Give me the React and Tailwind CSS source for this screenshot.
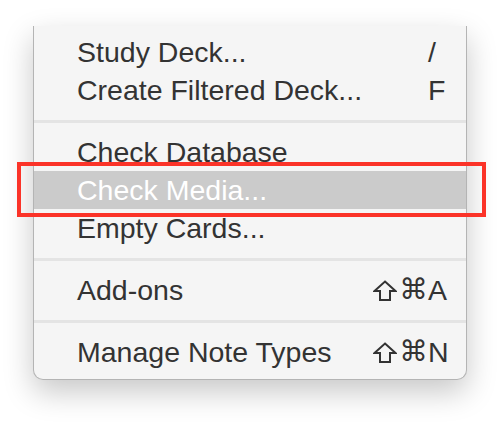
import React from 'react';

const font = { fontFamily: '"Liberation Sans", "DejaVu Sans", Arial, sans-serif' };

const groups = [
    [
        { label: 'Study Deck...', key: '/' },
        { label: 'Create Filtered Deck...', key: 'F' },
    ],
    [
        { label: 'Check Database' },
        { label: 'Check Media...', active: true },
        { label: 'Empty Cards...' },
    ],
    [{ label: 'Add-ons', mods: true, key: 'A' }],
    [{ label: 'Manage Note Types', mods: true, key: 'N' }],
];

// outline shift arrow, DejaVu's is too narrow
const ShiftIcon = () => (
    <svg width="24" height="21" viewBox="0 0 24 21" fill="none" stroke="currentColor" strokeWidth="2" strokeLinejoin="miter" className="mr-[3px]">
        <path d="M12 1.5 L22.5 11 H17 V20 H7 V11 H1.5 Z" />
    </svg>
);

const MenuRow = ({ item }) => (
    <div className={`relative flex h-[38px] items-center pl-[43px] pr-[18px] leading-[38px] ${item.active ? 'bg-[#cbcbcb] text-white' : 'text-[#333]'}`}>
        <span className="flex-1 whitespace-nowrap">{item.label}</span>
        {item.mods && (
            <span className="flex items-center whitespace-nowrap">
                <ShiftIcon />
                <span style={{ fontFamily: '"DejaVu Sans", sans-serif' }}>⌘</span>
            </span>
        )}
        <span className="w-[20px] whitespace-nowrap">{item.key}</span>
        {/* red annotation box */}
        {item.active && (
            <div className="pointer-events-none absolute -top-[9px] -bottom-[8px] -left-[17px] -right-[20px] border-4 border-[#fb3328]" />
        )}
    </div>
);

const App = () => {
    return (
        <div className="h-[422px] w-[500px] overflow-hidden bg-white pt-[26px] pl-[33px]" style={font}>
            <div className="w-[434px] rounded-b-[10px] border-x border-b border-[#b4b4b4] bg-[#f5f5f5] pt-[7px] pb-[8px] text-[28.5px] shadow-[0_12px_30px_rgba(0,0,0,0.22)]">
                {groups.map((group, gi) => (
                    <div key={gi}>
                        {gi > 0 && (
                            <div className="flex h-[24px] items-center">
                                <div className="h-[3px] w-full bg-[#e4e4e4]" />
                            </div>
                        )}
                        {group.map((item) => <MenuRow key={item.label} item={item} />)}
                    </div>
                ))}
            </div>
        </div>
    );
};

export default App;
